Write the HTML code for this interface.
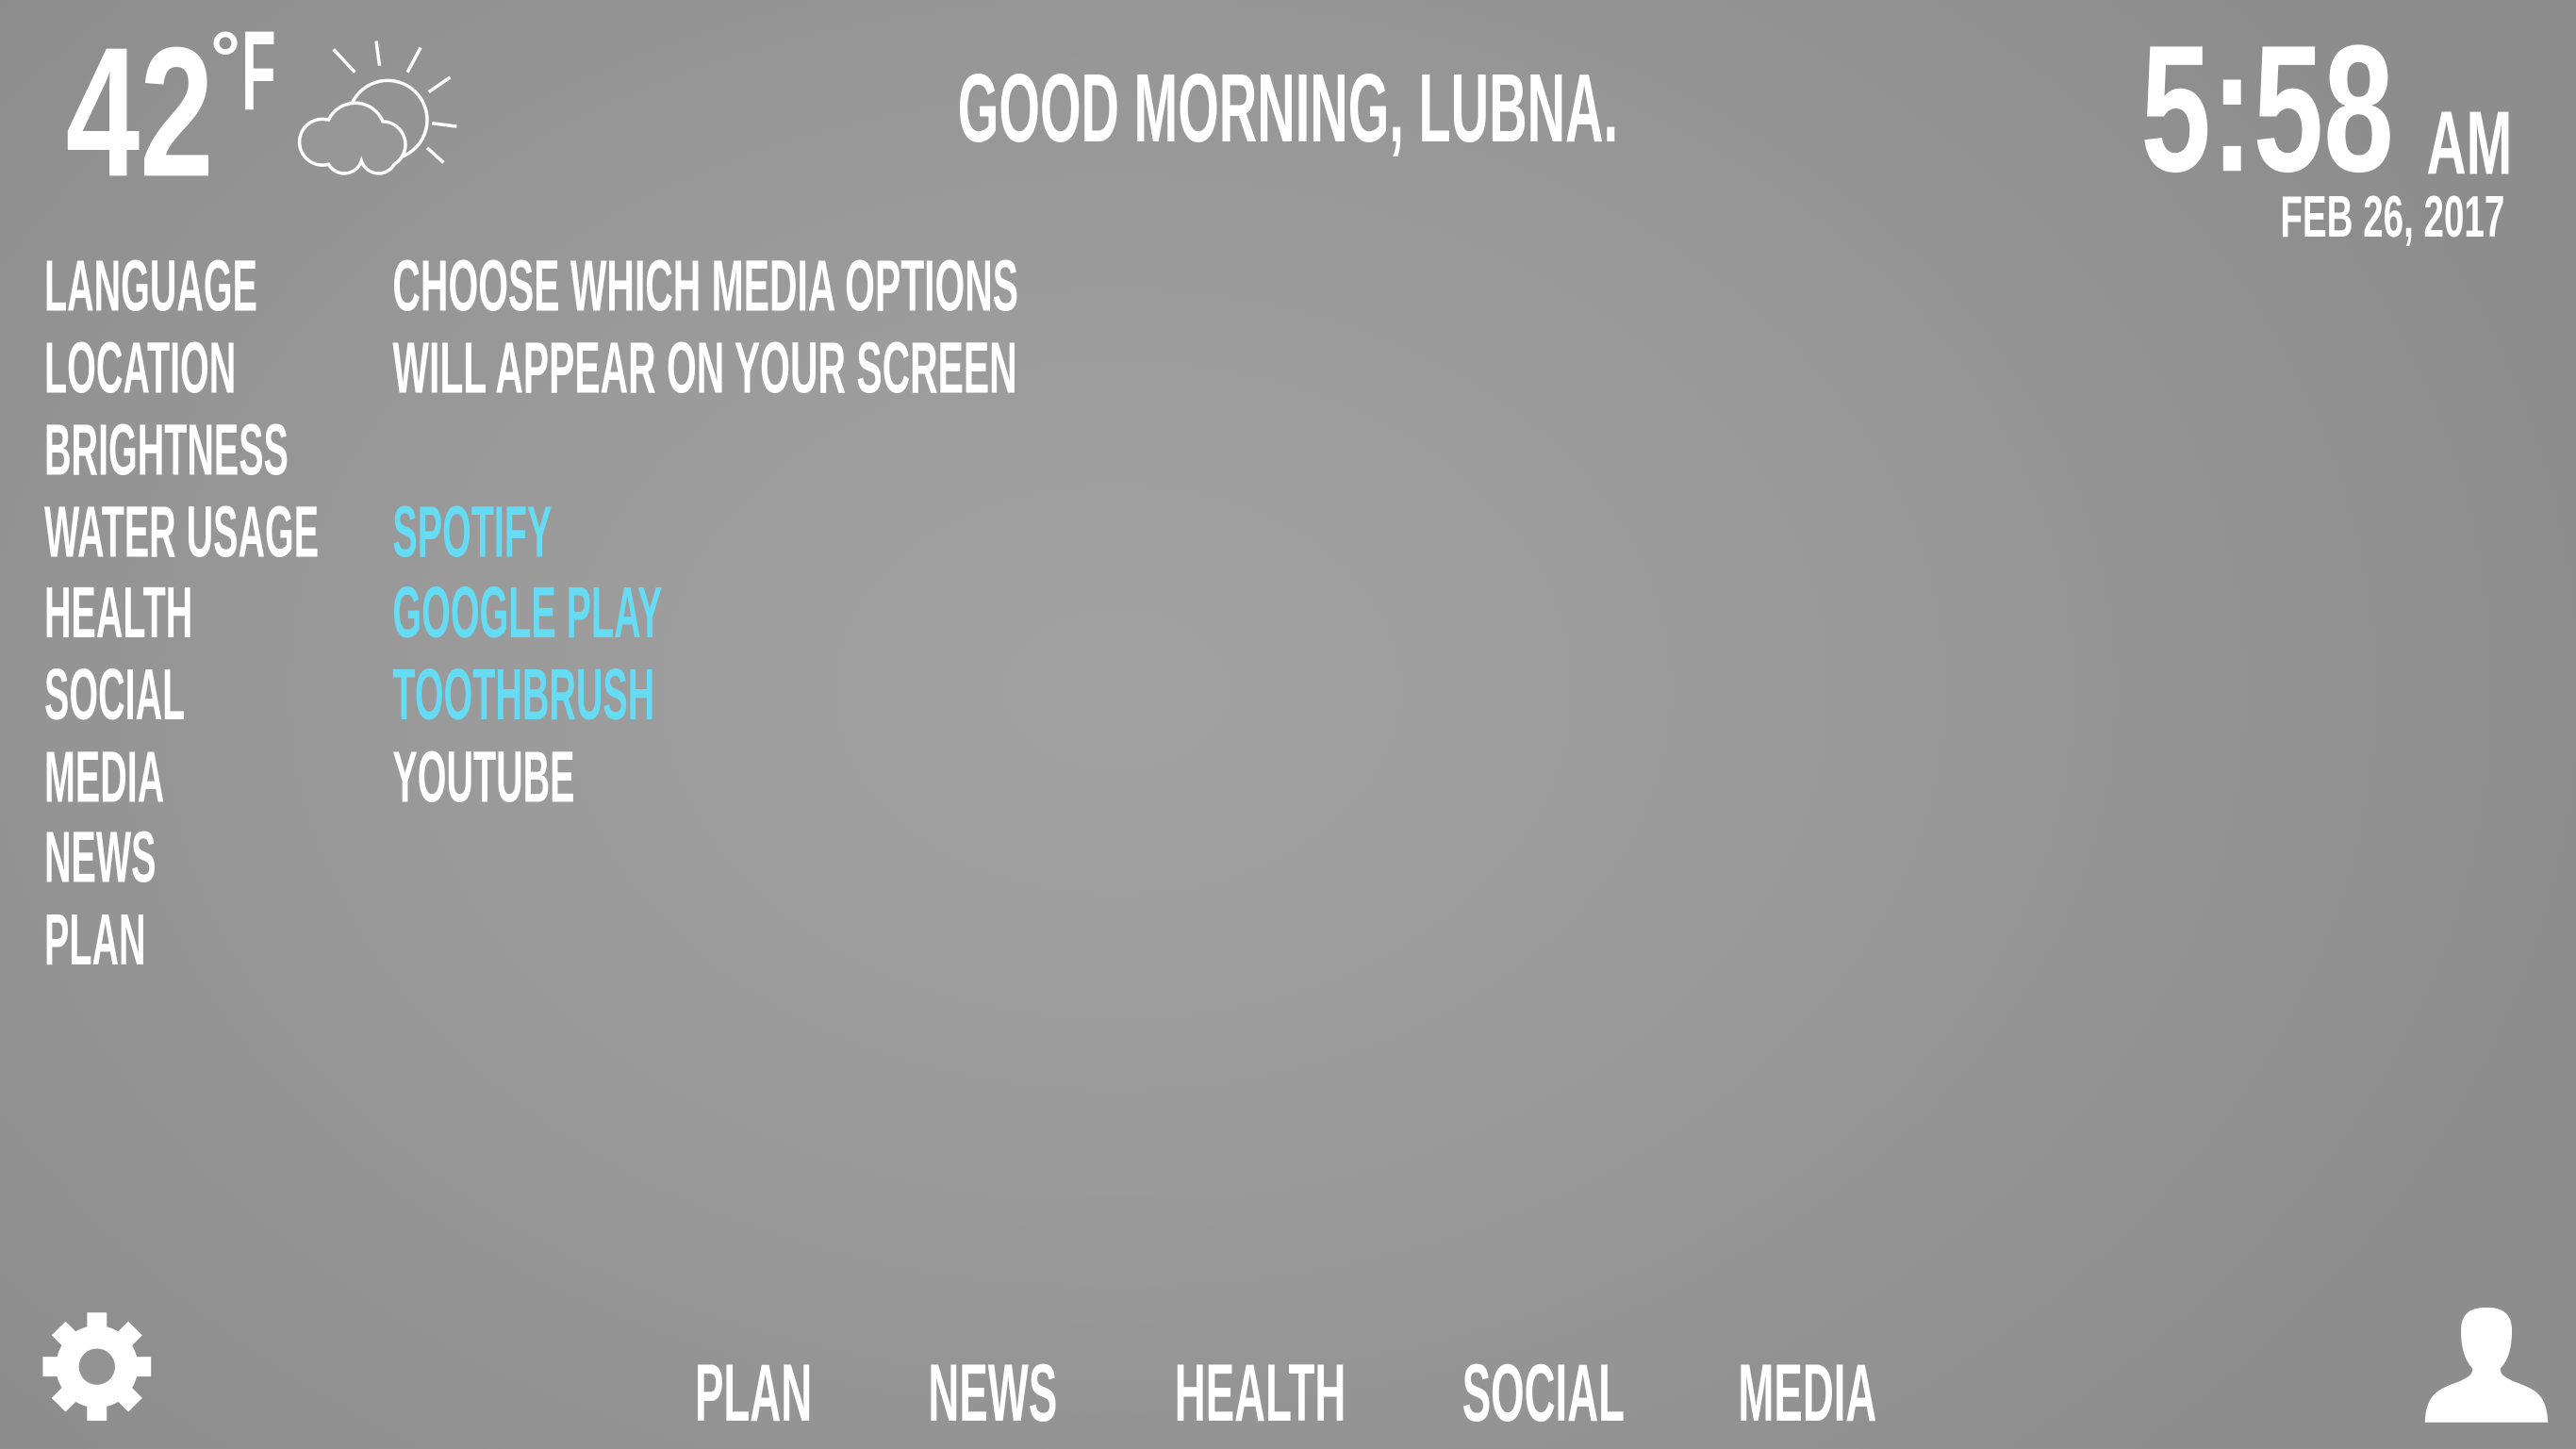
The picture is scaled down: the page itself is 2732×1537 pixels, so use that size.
<!DOCTYPE html>
<html><head><meta charset="utf-8"><style>
html,body{margin:0;padding:0;width:2732px;height:1536px;overflow:hidden;background:#929292}
#s{position:absolute;left:0;top:0;width:1568px;height:882px;transform:scale(1.74235);transform-origin:0 0;
background:radial-gradient(ellipse 900px 650px at 680px 420px,#a2a2a2 0%,#9a9a9a 45%,#8d8d8d 100%)}
.t{position:absolute;white-space:nowrap;transform-origin:0 0;line-height:1;font-family:"Liberation Sans",sans-serif;font-weight:bold;color:#fff}
.m{font-size:44px;transform:scaleX(.515)}
.w{transform:scaleX(.533)}
.b{color:#66dbf4}
.n{font-size:49.4px;transform:scaleX(.53);top:824px}
</style></head><body><div id="s">
<div class="t" style="left:40px;top:12px;font-size:112.5px;transform:scaleX(.72)">42</div>
<div class="t" style="left:128px;top:12px;font-size:46px;font-weight:bold">°</div>
<div class="t" style="left:147px;top:10px;font-size:68.6px;transform:scaleX(.5)">F</div>
<svg style="position:absolute;left:0;top:0" width="300" height="120" fill="none" stroke="#fff" stroke-width="2">
<circle cx="236" cy="73" r="24"/>
<path d="M203,30L216,44M229,25L231,40M256,29L248,44M274,47L261,56M263,75L278,77M260,90L270,99"/>
<path fill="#979797" d="M200,100 A14,14 0 1 1 200,73 A18,18 0 0 1 233,74 A14,14 0 0 1 240,100 A11,11 0 0 1 220,98 A11,11 0 0 1 200,100 Z"/>
</svg>
<div class="t" style="left:583px;top:37px;font-size:59px;transform:scaleX(.545)">GOOD MORNING, LUBNA.</div>
<div class="t" style="left:1303px;top:12px;font-size:110px;transform:scaleX(.70)">5:58</div>
<div class="t" style="left:1477px;top:60px;font-size:55px;transform:scaleX(.61)">AM</div>
<div class="t" style="left:1388px;top:115px;font-size:35.7px;transform:scaleX(.62)">FEB 26, 2017</div>

<div class="t m" style="left:27px;top:153px">LANGUAGE</div>
<div class="t m" style="left:27px;top:203px">LOCATION</div>
<div class="t m" style="left:27px;top:253px">BRIGHTNESS</div>
<div class="t m" style="left:27px;top:303px">WATER USAGE</div>
<div class="t m" style="left:27px;top:352px">HEALTH</div>
<div class="t m" style="left:27px;top:402px">SOCIAL</div>
<div class="t m" style="left:27px;top:452px">MEDIA</div>
<div class="t m" style="left:27px;top:501px">NEWS</div>
<div class="t m" style="left:27px;top:551px">PLAN</div>

<div class="t m w" style="left:239px;top:153px">CHOOSE WHICH MEDIA OPTIONS</div>
<div class="t m w" style="left:239px;top:203px">WILL APPEAR ON YOUR SCREEN</div>
<div class="t m b" style="left:239px;top:303px">SPOTIFY</div>
<div class="t m b" style="left:239px;top:352px">GOOGLE PLAY</div>
<div class="t m b" style="left:239px;top:402px">TOOTHBRUSH</div>
<div class="t m" style="left:239px;top:452px">YOUTUBE</div>

<div class="t n" style="left:423px">PLAN</div>
<div class="t n" style="left:565px">NEWS</div>
<div class="t n" style="left:715px">HEALTH</div>
<div class="t n" style="left:890px">SOCIAL</div>
<div class="t n" style="left:1058px">MEDIA</div>

<svg style="position:absolute;left:26px;top:799px" width="66" height="66" viewBox="-33 -33 66 66">
<g fill="#fff">
<circle r="25"/>
<g id="tt"><rect x="-6" y="-33" width="12" height="14"/></g>
<use href="#tt" transform="rotate(45)"/><use href="#tt" transform="rotate(90)"/><use href="#tt" transform="rotate(135)"/>
<use href="#tt" transform="rotate(180)"/><use href="#tt" transform="rotate(225)"/><use href="#tt" transform="rotate(270)"/><use href="#tt" transform="rotate(315)"/>
</g>
<circle r="11" fill="#939393"/>
</svg>
<svg style="position:absolute;left:1476px;top:796px" width="75" height="70" viewBox="0 0 75 70">
<path fill="#fff" d="M22,14 C22,2 30,0 37.5,0 C45,0 53,2 53,14 C53,26 50,33 46,37 C46,41 48,42 54,45 C68,50 74,53 75,70 L0,70 C1,53 7,50 21,45 C27,42 29,41 29,37 C25,33 22,26 22,14 Z"/>
</svg>
</div></body></html>
